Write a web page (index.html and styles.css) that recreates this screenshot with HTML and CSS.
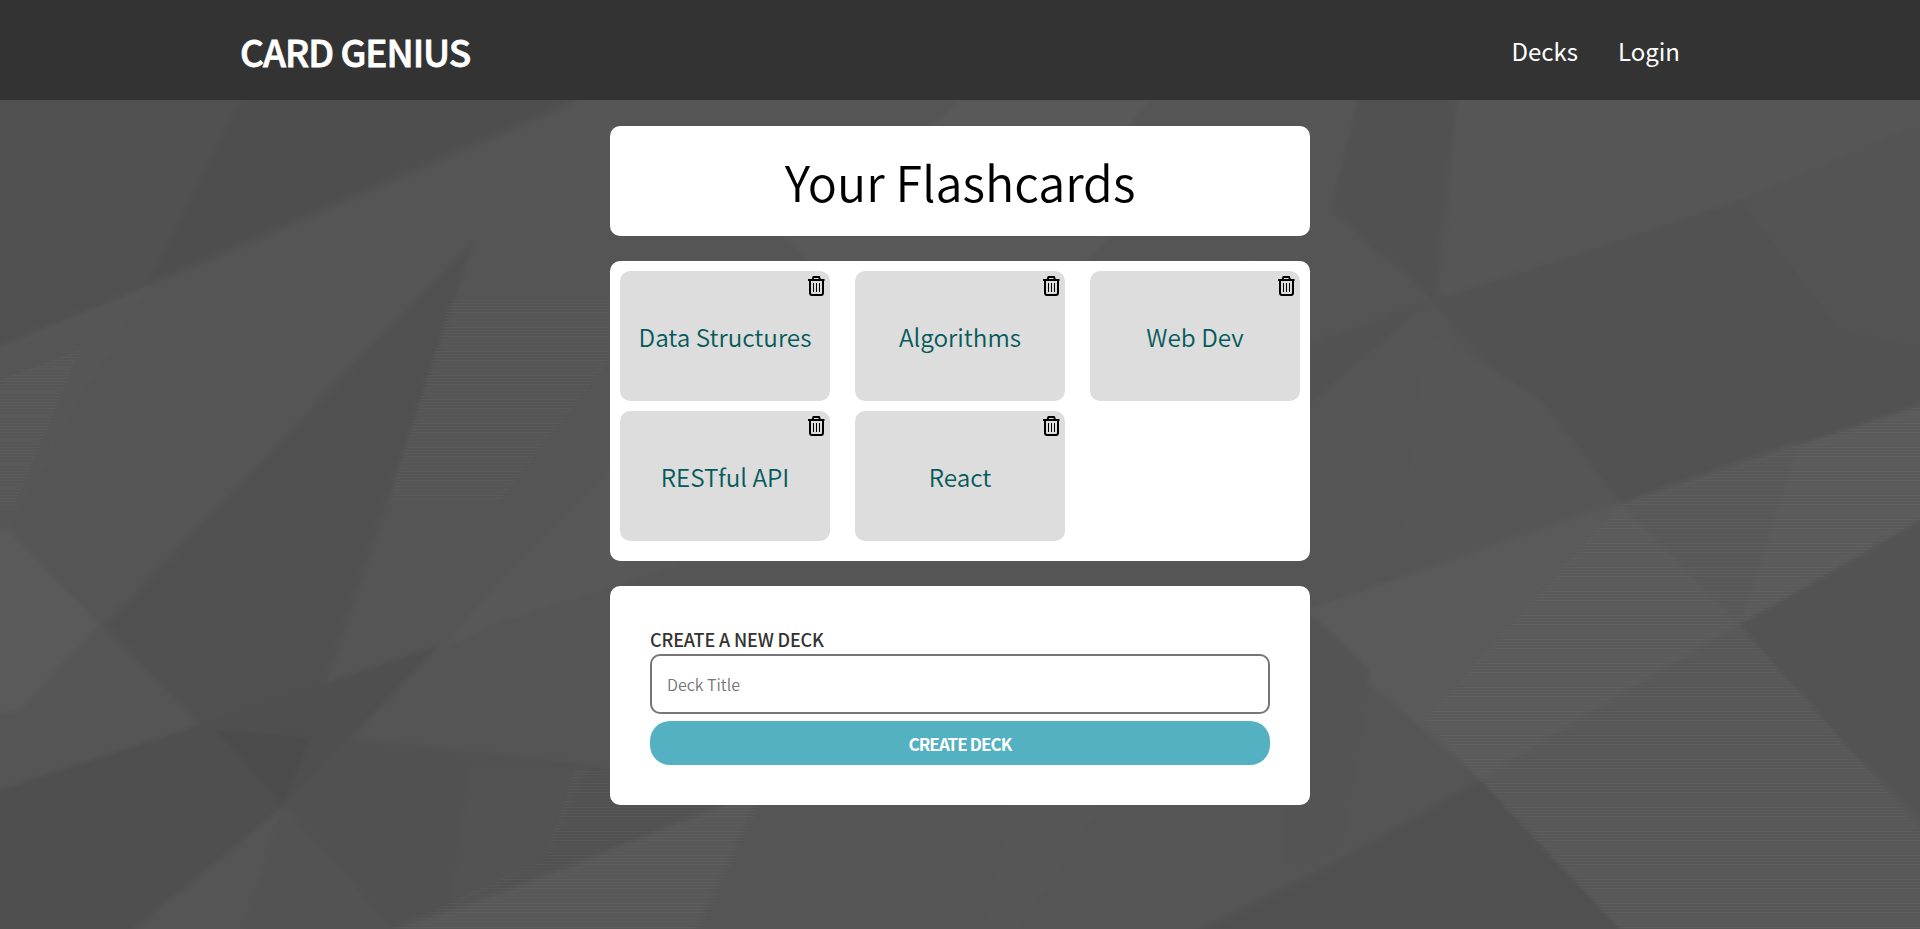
FILE: index.html
```html
<!DOCTYPE html>
<html lang="en">
<head>
<meta charset="utf-8">
<title>Card Genius</title>
<link rel="stylesheet" href="styles.css">
</head>
<body>
<svg class="backdrop" viewBox="0 0 1920 929" preserveAspectRatio="none" aria-hidden="true">
  <defs>
    <pattern id="lines" width="4" height="3" patternUnits="userSpaceOnUse"><path d="M0 .5H4" stroke="#fff" stroke-opacity=".03"/></pattern>
  </defs>
  <rect width="1920" height="929" fill="#555"/>
  <g class="facets">
    <path d="M-9 90H590L560 110 200 265 -9 350Z" fill="#505050"/>
    <path d="M245 90H590L400 170 150 280Z" fill="#4d4d4d"/>
    <path d="M-9 350L150 285 80 400 10 530H-9Z" fill="#575757"/>
    <path d="M475 238L105 625 200 725 325 685 385 505Z" fill="#505050"/>
    <path d="M10 530L100 625 20 710 -9 715V530Z" fill="#5b5b5b"/>
    <path d="M-9 793L200 725 320 685 440 645 285 805 200 875 120 940H-9Z" fill="#4e4e4e"/>
    <path d="M215 730L310 738 283 805Z" fill="#4a4a4a"/>
    <path d="M350 738L565 762 760 790 650 850 390 929 283 805Z" fill="#515151"/>
    <path d="M283 805L395 940H240Z" fill="#535353"/>
    <path d="M440 650L500 580 620 460H680V565L490 625Z" fill="#595959"/>
    <path d="M470 765L590 768 545 860 450 910Z" fill="#535353"/>
    <path d="M370 940L560 870 760 790 690 940Z" fill="#595959"/>
    <path d="M1010 805H1100L1060 870 1010 940H980Z" fill="#575757"/>
    <path d="M590 90H1370L1310 260 600 300Z" fill="#565656"/>
    <path d="M960 100H1150L1130 126H930ZM780 236H1110L1085 261H810Z" fill="#5a5a5a"/>
    <path d="M1360 90H1458L1435 300 1330 210Z" fill="#515151"/>
    <path d="M1458 90H1930V120L1740 200 1445 300Z" fill="#575757"/>
    <path d="M1290 350L1450 295 1740 200 1930 290V402L1620 503 1540 420 1430 300 1290 420Z" fill="#525252"/>
    <path d="M1740 200L1930 120V350L1840 330Z" fill="#545454"/>
    <path d="M1425 330L1540 400 1620 503 1395 580Z" fill="#575757"/>
    <path d="M1290 615L1620 503 1930 402V515L1740 625 1480 780Z" fill="#5b5b5b"/>
    <path d="M1620 503L1800 440 1740 625Z" fill="#595959"/>
    <path d="M1740 625L1930 515V840L1860 760Z" fill="#535353"/>
    <path d="M1480 780L1740 625 1860 760 1930 830V940H1620Z" fill="#585858"/>
    <path d="M1290 595L1370 670 1340 850 1290 870Z" fill="#545454"/>
    <path d="M1180 940L1330 865 1480 780 1630 940Z" fill="#505050"/>
  </g>
  <path d="M450 300H610V360L500 500H390ZM0 380L80 350 15 505H0ZM575 770H610V805H760L700 929H390L545 860ZM1620 505L1920 405V520L1740 625 1860 760 1920 830V929H1620L1480 780 1425 720Z" fill="url(#lines)"/>
</svg>
<header class="topbar">
  <a class="logo">CARD GENIUS</a>
  <nav class="links"><a>Decks</a><a>Login</a></nav>
</header>
<main class="content">
  <section class="panel heading"><h1>Your Flashcards</h1></section>
  <section class="panel decks">
    <article class="deck"><span class="name">Data Structures</span><svg class="trash" viewBox="0 0 18 22"><use href="#bin"/></svg></article>
    <article class="deck"><span class="name">Algorithms</span><svg class="trash" viewBox="0 0 18 22"><use href="#bin"/></svg></article>
    <article class="deck"><span class="name">Web Dev</span><svg class="trash" viewBox="0 0 18 22"><use href="#bin"/></svg></article>
    <article class="deck"><span class="name">RESTful API</span><svg class="trash" viewBox="0 0 18 22"><use href="#bin"/></svg></article>
    <article class="deck"><span class="name">React</span><svg class="trash" viewBox="0 0 18 22"><use href="#bin"/></svg></article>
  </section>
  <form class="panel create">
    <label for="title">CREATE A NEW DECK</label>
    <input id="title" type="text" placeholder="Deck Title">
    <button type="button">CREATE DECK</button>
  </form>
</main>
<svg class="symbols" aria-hidden="true">
  <symbol id="bin" viewBox="0 0 18 22">
    <path d="M1 5H17.500M5.500 4.500L6.500 2H12L13 4.500M3 5V17.500Q3 20 5 20H14Q16 20 16 17.500V5" fill="none" stroke="#000" stroke-width="2"/>
    <path d="M6.500 8V17M9.500 8V17M12.500 8V17" stroke="#000" stroke-width="1"/>
  </symbol>
</svg>
</body>
</html>
```
FILE: styles.css
```css
* { box-sizing: border-box; }
body {
  margin: 0;
  min-height: 929px;
  background: #555;
  font-family: "Noto Sans CJK SC", "Open Sans", sans-serif;
  position: relative;
  overflow: hidden;
}
.backdrop { position: absolute; inset: 0; width: 100%; height: 929px; z-index: -1; }
.facets { filter: blur(2px); opacity: .85; }
.symbols { position: absolute; width: 0; height: 0; }
.topbar {
  height: 100px;
  padding: 0 240px;
  background: #333;
  color: #fff;
  display: flex;
  align-items: center;
  justify-content: space-between;
}
.logo {
  font-size: 37px;
  font-weight: 500;
  line-height: 54px;
  letter-spacing: -1px;
  padding-top: 2px;
  -webkit-text-stroke: .8px #fff;
}
.links { display: flex; gap: 40px; font-size: 24px; line-height: 36px; padding-top: 2px; }
.content { width: 700px; margin: 26px auto 0; display: flex; flex-direction: column; gap: 25px; }
.panel { background: #fff; border-radius: 10px; }
.heading { height: 110px; display: flex; align-items: center; justify-content: center; }
h1 { margin: 0; font-size: 48.500px; font-weight: 350; line-height: 70px; color: #000; }
.decks {
  height: 300px;
  padding: 10px;
  display: grid;
  grid-template-columns: repeat(3, 210px);
  grid-auto-rows: 130px;
  column-gap: 25px;
  row-gap: 10px;
}
.deck {
  position: relative;
  border-radius: 10px;
  background: #ddd;
  display: flex;
  align-items: center;
  justify-content: center;
  padding-top: 2px;
  color: #055a5b;
  font-size: 24.300px;
  font-weight: 350;
  line-height: 36px;
}
.trash { position: absolute; right: 5px; top: 4px; width: 18px; height: 22px; }
.create { height: 219px; padding: 40px; display: flex; flex-direction: column; }
.create label { height: 28px; line-height: 27px; font-size: 18px; font-weight: 500; letter-spacing: -.150px; color: #333; }
.create input {
  height: 60px;
  padding: 0 15px;
  border: 2px solid #767676;
  border-radius: 10px;
  font: 350 16px "Noto Sans CJK SC", sans-serif;
  background: #fff;
}
.create input::placeholder { color: #767676; }
.create button {
  height: 44px;
  margin-top: 7px;
  padding: 1px 0 0;
  border: 0;
  border-radius: 20px;
  background: #53b1c1;
  color: #fff;
  font: 700 17px/43px "Noto Sans CJK SC", sans-serif;
  letter-spacing: -.900px;
}
```
